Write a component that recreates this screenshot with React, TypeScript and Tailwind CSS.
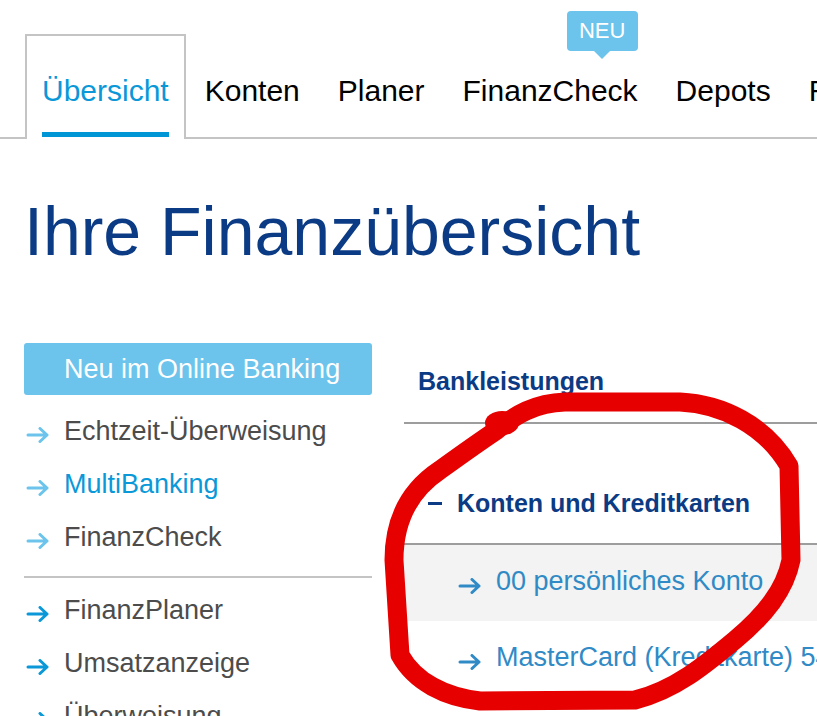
import React from "react";

type Tab = { label: string; active?: boolean; badge?: string };

const tabs: Tab[] = [
  { label: "Übersicht", active: true },
  { label: "Konten" },
  { label: "Planer" },
  { label: "FinanzCheck", badge: "NEU" },
  { label: "Depots" },
  { label: "Rechner" },
];

const newItems = [
  { label: "Echtzeit-Überweisung" },
  { label: "MultiBanking", highlight: true },
  { label: "FinanzCheck" },
];

const moreItems = ["FinanzPlaner", "Umsatzanzeige", "Überweisung"];

function Arrow({ color }: { color: string }) {
  return (
    <svg width="24" height="16" viewBox="0 0 24 16" className="mt-[9px] shrink-0">
      <path
        d="M2 8h19M14 1.5l7 6.5-7 6.5"
        fill="none"
        stroke={color}
        strokeWidth="3"
        strokeLinecap="round"
        strokeLinejoin="round"
      />
    </svg>
  );
}

function App() {
  return (
    <div className="relative h-screen overflow-hidden bg-white font-['Liberation_Sans',Arial,sans-serif]">
      {/* Hauptnavigation */}
      <div className="flex items-start whitespace-nowrap border-b-2 border-[#c4c4c4] pl-[25px] pt-[34px]">
        {tabs.map((tab) =>
          tab.active ? (
            <div
              key={tab.label}
              className="-mb-[2px] flex h-[105px] flex-col border-2 border-b-0 border-[#c4c4c4] bg-white px-[15px] pt-[40px]"
            >
              <span className="text-[30px] leading-[30px] text-[#0a98d8]">{tab.label}</span>
              <span className="mt-[26px] h-[5px] bg-[#0096d6]" />
            </div>
          ) : (
            <div key={tab.label} className="h-[103px] px-[19px] pt-[42px]">
              <span className="relative text-[30px] leading-[30px] text-black">
                {tab.label}
                {tab.badge && (
                  <span className="absolute right-0 top-[-63px] flex h-[40px] w-[71px] items-center justify-center rounded-[4px] bg-[#6cc3eb] text-[22px] leading-none text-white">
                    {tab.badge}
                    <span className="absolute left-1/2 top-full -translate-x-1/2 border-x-[8px] border-t-[8px] border-x-transparent border-t-[#6cc3eb]" />
                  </span>
                )}
              </span>
            </div>
          )
        )}
      </div>

      <div className="pl-[24px]">
        <h1 className="mt-[58px] whitespace-nowrap text-[68px] leading-[68px] text-[#0b3b84]">
          Ihre Finanzübersicht
        </h1>

        <div className="mt-[78px] flex gap-[32px]">
          {/* linke Spalte */}
          <div className="w-[348px] shrink-0">
            <div className="flex h-[52px] items-center rounded-[3px] bg-[#6cc3eb] pl-[40px] text-[27px] leading-[30px] text-white">
              Neu im Online Banking
            </div>
            <ul className="mt-[9px]">
              {newItems.map((item) => (
                <li key={item.label} className="flex h-[53px] items-center pl-[2px]">
                  <Arrow color="#6cc3eb" />
                  <span
                    className={
                      item.highlight
                        ? "ml-[14px] text-[27px] leading-[30px] text-[#0a98d8]"
                        : "ml-[14px] text-[27px] leading-[30px] text-[#4c4c4c]"
                    }
                  >
                    {item.label}
                  </span>
                </li>
              ))}
            </ul>
            <div className="mt-[13px] h-[2px] bg-[#c4c4c4]" />
            <ul className="mt-[5px]">
              {moreItems.map((label) => (
                <li key={label} className="flex h-[53px] items-center pl-[2px]">
                  <Arrow color="#0a98d8" />
                  <span className="ml-[14px] text-[27px] leading-[30px] text-[#4c4c4c]">{label}</span>
                </li>
              ))}
            </ul>
          </div>

          {/* rechte Spalte */}
          <div className="min-w-0 flex-1 overflow-hidden whitespace-nowrap">
            <div className="border-b-2 border-[#9d9d9d] pb-[28px] pl-[14px] pt-[26px] text-[25px] font-bold leading-[25px] text-[#0b3b84]">
              Bankleistungen
            </div>
            <div className="flex items-center border-b-2 border-[#9d9d9d] pb-[27px] pl-[24px] pt-[67px]">
              <span className="h-[3px] w-[14px] bg-[#0b3b84]" />
              <span className="ml-[15px] text-[25px] font-bold leading-[25px] text-[#0b3b84]">
                Konten und Kreditkarten
              </span>
            </div>
            <div className="flex h-[76px] items-center bg-[#f2f3f2] pb-[4px] pl-[54px]">
              <Arrow color="#2f8ac6" />
              <span className="ml-[14px] text-[27px] leading-[30px] text-[#2f8ac6]">00 persönliches Konto</span>
            </div>
            <div className="flex h-[76px] items-center pb-[4px] pl-[54px]">
              <Arrow color="#2f8ac6" />
              <span className="ml-[14px] text-[27px] leading-[30px] text-[#2f8ac6]">
                MasterCard (Kreditkarte) 5412 XXXX XXXX 1234
              </span>
            </div>
          </div>
        </div>
      </div>

      {/* rote Markierung */}
      <svg
        className="pointer-events-none absolute left-0 top-0"
        width="817"
        height="716"
        viewBox="0 0 817 716"
      >
        <path
          d="M497 430 C515 415 535 403 565 402 L680 402 C722 404 765 425 789 466 L791 560 C785 590 765 615 735 640 C705 665 675 690 635 700 L480 701 C445 697 415 682 400 655 L394 560 C394 520 410 490 440 470 C465 452 482 440 497 430 Z"
          fill="none"
          stroke="#e60000"
          strokeWidth="19"
          strokeLinejoin="round"
          strokeLinecap="round"
        />
        <ellipse cx="502" cy="423" rx="17" ry="12" fill="#e60000" />
      </svg>
    </div>
  );
}

export default App;
